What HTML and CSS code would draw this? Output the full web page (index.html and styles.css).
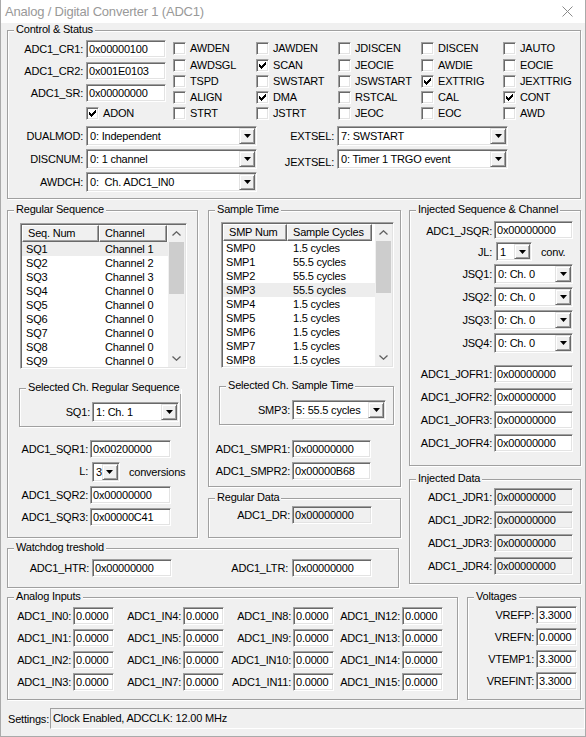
FILE: index.html
```html
<!DOCTYPE html>
<html>
<head>
<meta charset="utf-8">
<link rel="stylesheet" href="styles.css">
</head>
<body>
<div class="window">
  <div class="titlebar">
    <span class="title">Analog / Digital Converter 1 (ADC1)</span>
    <svg class="close" width="11" height="11" viewBox="0 0 11 11"><path d="M0.5 0.5L10.5 10.5M10.5 0.5L0.5 10.5" stroke="#8a8a8a" stroke-width="1" fill="none"/></svg>
  </div>
  <div class="client">
    <div class="group g-cs">
      <span class="legend">Control &amp; Status</span>
      <div class="cs-top">
        <div class="regs">
          <span class="lbl">ADC1_CR1:</span><span class="edit">0x00000100</span>
          <span class="lbl">ADC1_CR2:</span><span class="edit">0x001E0103</span>
          <span class="lbl">ADC1_SR:</span><span class="edit">0x00000000</span>
          <span></span><span class="chk adon"><span class="box on"><svg width="7" height="7" viewBox="0 0 7 7"><path d="M0 2h1v3H0zM1 3h1v3H1zM2 4h1v3H2zM3 3h1v3H3zM4 2h1v3H4zM5 1h1v3H5zM6 0h1v3H6z"/></svg></span>ADON</span>
        </div>
        <div class="checks">
          <span class="chk"><span class="box"></span>AWDEN</span>
          <span class="chk"><span class="box"></span>JAWDEN</span>
          <span class="chk"><span class="box"></span>JDISCEN</span>
          <span class="chk"><span class="box"></span>DISCEN</span>
          <span class="chk"><span class="box"></span>JAUTO</span>
          <span class="chk"><span class="box"></span>AWDSGL</span>
          <span class="chk"><span class="box on"><svg width="7" height="7" viewBox="0 0 7 7"><path d="M0 2h1v3H0zM1 3h1v3H1zM2 4h1v3H2zM3 3h1v3H3zM4 2h1v3H4zM5 1h1v3H5zM6 0h1v3H6z"/></svg></span>SCAN</span>
          <span class="chk"><span class="box"></span>JEOCIE</span>
          <span class="chk"><span class="box"></span>AWDIE</span>
          <span class="chk"><span class="box"></span>EOCIE</span>
          <span class="chk"><span class="box"></span>TSPD</span>
          <span class="chk"><span class="box"></span>SWSTART</span>
          <span class="chk"><span class="box"></span>JSWSTART</span>
          <span class="chk"><span class="box on"><svg width="7" height="7" viewBox="0 0 7 7"><path d="M0 2h1v3H0zM1 3h1v3H1zM2 4h1v3H2zM3 3h1v3H3zM4 2h1v3H4zM5 1h1v3H5zM6 0h1v3H6z"/></svg></span>EXTTRIG</span>
          <span class="chk"><span class="box"></span>JEXTTRIG</span>
          <span class="chk"><span class="box"></span>ALIGN</span>
          <span class="chk"><span class="box on"><svg width="7" height="7" viewBox="0 0 7 7"><path d="M0 2h1v3H0zM1 3h1v3H1zM2 4h1v3H2zM3 3h1v3H3zM4 2h1v3H4zM5 1h1v3H5zM6 0h1v3H6z"/></svg></span>DMA</span>
          <span class="chk"><span class="box"></span>RSTCAL</span>
          <span class="chk"><span class="box"></span>CAL</span>
          <span class="chk"><span class="box on"><svg width="7" height="7" viewBox="0 0 7 7"><path d="M0 2h1v3H0zM1 3h1v3H1zM2 4h1v3H2zM3 3h1v3H3zM4 2h1v3H4zM5 1h1v3H5zM6 0h1v3H6z"/></svg></span>CONT</span>
          <span class="chk"><span class="box"></span>STRT</span>
          <span class="chk"><span class="box"></span>JSTRT</span>
          <span class="chk"><span class="box"></span>JEOC</span>
          <span class="chk"><span class="box"></span>EOC</span>
          <span class="chk"><span class="box"></span>AWD</span>
        </div>
      </div>
      <div class="cs-combos">
        <span class="lbl">DUALMOD:</span>
        <span class="combo"><span class="val">0: Independent</span><span class="btn"><svg width="7" height="4" viewBox="0 0 7 4"><path d="M0 0h7L3.5 4z"/></svg></span></span>
        <span class="lbl">EXTSEL:</span>
        <span class="combo"><span class="val">7: SWSTART</span><span class="btn"><svg width="7" height="4" viewBox="0 0 7 4"><path d="M0 0h7L3.5 4z"/></svg></span></span>
        <span class="lbl">DISCNUM:</span>
        <span class="combo"><span class="val">0: 1 channel</span><span class="btn"><svg width="7" height="4" viewBox="0 0 7 4"><path d="M0 0h7L3.5 4z"/></svg></span></span>
        <span class="lbl low">JEXTSEL:</span>
        <span class="combo"><span class="val">0: Timer 1 TRGO event</span><span class="btn"><svg width="7" height="4" viewBox="0 0 7 4"><path d="M0 0h7L3.5 4z"/></svg></span></span>
        <span class="lbl">AWDCH:</span>
        <span class="combo"><span class="val">0:&nbsp; Ch. ADC1_IN0</span><span class="btn"><svg width="7" height="4" viewBox="0 0 7 4"><path d="M0 0h7L3.5 4z"/></svg></span></span>
      </div>
    </div>

    <div class="mid">
      <div class="mid-left">
        <div class="mid-row">
          <div class="group g-regseq">
            <span class="legend">Regular Sequence</span>
            <div class="list list-seq">
              <div class="list-main">
                <div class="lhead"><span class="hcell c1">Seq. Num</span><span class="hcell c2">Channel</span></div>
                <div class="lrow sel"><span class="c1">SQ1</span><span class="c2">Channel 1</span></div>
                <div class="lrow"><span class="c1">SQ2</span><span class="c2">Channel 2</span></div>
                <div class="lrow"><span class="c1">SQ3</span><span class="c2">Channel 3</span></div>
                <div class="lrow"><span class="c1">SQ4</span><span class="c2">Channel 0</span></div>
                <div class="lrow"><span class="c1">SQ5</span><span class="c2">Channel 0</span></div>
                <div class="lrow"><span class="c1">SQ6</span><span class="c2">Channel 0</span></div>
                <div class="lrow"><span class="c1">SQ7</span><span class="c2">Channel 0</span></div>
                <div class="lrow"><span class="c1">SQ8</span><span class="c2">Channel 0</span></div>
                <div class="lrow"><span class="c1">SQ9</span><span class="c2">Channel 0</span></div>
              </div>
              <div class="scroll">
                <span class="sarrow"><svg width="9" height="5" viewBox="0 0 9 5"><path d="M0.5 4.5L4.5 0.8L8.5 4.5" stroke="#606060" stroke-width="1.3" fill="none"/></svg></span>
                <span class="thumb"></span>
                <span class="strack"></span>
                <span class="sarrow"><svg width="9" height="5" viewBox="0 0 9 5"><path d="M0.5 0.5L4.5 4.2L8.5 0.5" stroke="#606060" stroke-width="1.3" fill="none"/></svg></span>
              </div>
            </div>
            <div class="group sub sub-seq">
              <span class="legend">Selected Ch. Regular Sequence</span>
              <span class="lbl">SQ1:</span>
              <span class="combo w87"><span class="val">1: Ch. 1</span><span class="btn"><svg width="7" height="4" viewBox="0 0 7 4"><path d="M0 0h7L3.5 4z"/></svg></span></span>
            </div>
            <div class="fields f-seq">
              <span class="lbl">ADC1_SQR1:</span><span class="edit">0x00200000</span>
              <span class="lbl">L:</span>
              <span class="inline"><span class="combo w32"><span class="val">3</span><span class="btn"><svg width="7" height="4" viewBox="0 0 7 4"><path d="M0 0h7L3.5 4z"/></svg></span></span><span class="after">conversions</span></span>
              <span class="lbl">ADC1_SQR2:</span><span class="edit">0x00000000</span>
              <span class="lbl">ADC1_SQR3:</span><span class="edit">0x00000C41</span>
            </div>
          </div>
          <div class="col2">
            <div class="group g-sample">
              <span class="legend">Sample Time</span>
              <div class="list list-smp">
                <div class="list-main">
                  <div class="lhead"><span class="hcell s1">SMP Num</span><span class="hcell s2">Sample Cycles</span></div>
                  <div class="lrow"><span class="s1">SMP0</span><span class="s2">1.5 cycles</span></div>
                  <div class="lrow"><span class="s1">SMP1</span><span class="s2">55.5 cycles</span></div>
                  <div class="lrow"><span class="s1">SMP2</span><span class="s2">55.5 cycles</span></div>
                  <div class="lrow sel"><span class="s1">SMP3</span><span class="s2">55.5 cycles</span></div>
                  <div class="lrow"><span class="s1">SMP4</span><span class="s2">1.5 cycles</span></div>
                  <div class="lrow"><span class="s1">SMP5</span><span class="s2">1.5 cycles</span></div>
                  <div class="lrow"><span class="s1">SMP6</span><span class="s2">1.5 cycles</span></div>
                  <div class="lrow"><span class="s1">SMP7</span><span class="s2">1.5 cycles</span></div>
                  <div class="lrow"><span class="s1">SMP8</span><span class="s2">1.5 cycles</span></div>
                </div>
                <div class="scroll">
                  <span class="sarrow"><svg width="9" height="5" viewBox="0 0 9 5"><path d="M0.5 4.5L4.5 0.8L8.5 4.5" stroke="#606060" stroke-width="1.3" fill="none"/></svg></span>
                  <span class="thumb"></span>
                  <span class="strack"></span>
                  <span class="sarrow"><svg width="9" height="5" viewBox="0 0 9 5"><path d="M0.5 0.5L4.5 4.2L8.5 0.5" stroke="#606060" stroke-width="1.3" fill="none"/></svg></span>
                </div>
              </div>
              <div class="group sub sub-smp">
                <span class="legend">Selected Ch. Sample Time</span>
                <span class="lbl">SMP3:</span>
                <span class="combo w94"><span class="val">5: 55.5 cycles</span><span class="btn"><svg width="7" height="4" viewBox="0 0 7 4"><path d="M0 0h7L3.5 4z"/></svg></span></span>
              </div>
              <div class="fields f-smp">
                <span class="lbl">ADC1_SMPR1:</span><span class="edit">0x00000000</span>
                <span class="lbl">ADC1_SMPR2:</span><span class="edit">0x00000B68</span>
              </div>
            </div>
            <div class="group g-regdata">
              <span class="legend">Regular Data</span>
              <div class="fields f-smp f-dr">
                <span class="lbl">ADC1_DR:</span><span class="edit ro">0x00000000</span>
              </div>
            </div>
          </div>
        </div>
        <div class="group g-wd">
          <span class="legend">Watchdog treshold</span>
          <div class="wd-row">
            <span class="lbl wd1">ADC1_HTR:</span><span class="edit wd-edit">0x00000000</span>
            <span class="lbl wd2">ADC1_LTR:</span><span class="edit wd-edit">0x00000000</span>
          </div>
        </div>
      </div>
      <div class="mid-right">
        <div class="group g-inj">
          <span class="legend">Injected Sequence &amp; Channel</span>
          <div class="fields f-inj">
            <span class="lbl">ADC1_JSQR:</span><span class="edit">0x00000000</span>
            <span class="lbl">JL:</span>
            <span class="inline"><span class="combo w36 h19"><span class="val">1</span><span class="btn"><svg width="7" height="4" viewBox="0 0 7 4"><path d="M0 0h7L3.5 4z"/></svg></span></span><span class="after">conv.</span></span>
            <span class="lbl">JSQ1:</span><span class="combo"><span class="val">0: Ch. 0</span><span class="btn"><svg width="7" height="4" viewBox="0 0 7 4"><path d="M0 0h7L3.5 4z"/></svg></span></span>
            <span class="lbl">JSQ2:</span><span class="combo"><span class="val">0: Ch. 0</span><span class="btn"><svg width="7" height="4" viewBox="0 0 7 4"><path d="M0 0h7L3.5 4z"/></svg></span></span>
            <span class="lbl">JSQ3:</span><span class="combo"><span class="val">0: Ch. 0</span><span class="btn"><svg width="7" height="4" viewBox="0 0 7 4"><path d="M0 0h7L3.5 4z"/></svg></span></span>
            <span class="lbl">JSQ4:</span><span class="combo"><span class="val">0: Ch. 0</span><span class="btn"><svg width="7" height="4" viewBox="0 0 7 4"><path d="M0 0h7L3.5 4z"/></svg></span></span>
          </div>
          <div class="fields f-jofr">
            <span class="lbl">ADC1_JOFR1:</span><span class="edit">0x00000000</span>
            <span class="lbl">ADC1_JOFR2:</span><span class="edit">0x00000000</span>
            <span class="lbl">ADC1_JOFR3:</span><span class="edit">0x00000000</span>
            <span class="lbl">ADC1_JOFR4:</span><span class="edit">0x00000000</span>
          </div>
        </div>
        <div class="group g-injdata">
          <span class="legend">Injected Data</span>
          <div class="fields f-jdr">
            <span class="lbl">ADC1_JDR1:</span><span class="edit ro">0x00000000</span>
            <span class="lbl">ADC1_JDR2:</span><span class="edit ro">0x00000000</span>
            <span class="lbl">ADC1_JDR3:</span><span class="edit ro">0x00000000</span>
            <span class="lbl">ADC1_JDR4:</span><span class="edit ro">0x00000000</span>
          </div>
        </div>
      </div>
    </div>

    <div class="bottom">
      <div class="group g-analog">
        <span class="legend">Analog Inputs</span>
        <div class="ain">
          <span class="cell"><span class="lbl">ADC1_IN0:</span><span class="edit num">0.0000</span></span>
          <span class="cell"><span class="lbl">ADC1_IN4:</span><span class="edit num">0.0000</span></span>
          <span class="cell"><span class="lbl">ADC1_IN8:</span><span class="edit num">0.0000</span></span>
          <span class="cell"><span class="lbl">ADC1_IN12:</span><span class="edit num">0.0000</span></span>
          <span class="cell"><span class="lbl">ADC1_IN1:</span><span class="edit num">0.0000</span></span>
          <span class="cell"><span class="lbl">ADC1_IN5:</span><span class="edit num">0.0000</span></span>
          <span class="cell"><span class="lbl">ADC1_IN9:</span><span class="edit num">0.0000</span></span>
          <span class="cell"><span class="lbl">ADC1_IN13:</span><span class="edit num">0.0000</span></span>
          <span class="cell"><span class="lbl">ADC1_IN2:</span><span class="edit num">0.0000</span></span>
          <span class="cell"><span class="lbl">ADC1_IN6:</span><span class="edit num">0.0000</span></span>
          <span class="cell"><span class="lbl">ADC1_IN10:</span><span class="edit num">0.0000</span></span>
          <span class="cell"><span class="lbl">ADC1_IN14:</span><span class="edit num">0.0000</span></span>
          <span class="cell"><span class="lbl">ADC1_IN3:</span><span class="edit num">0.0000</span></span>
          <span class="cell"><span class="lbl">ADC1_IN7:</span><span class="edit num">0.0000</span></span>
          <span class="cell"><span class="lbl">ADC1_IN11:</span><span class="edit num">0.0000</span></span>
          <span class="cell"><span class="lbl">ADC1_IN15:</span><span class="edit num">0.0000</span></span>
        </div>
      </div>
      <div class="group g-volt">
        <span class="legend">Voltages</span>
        <div class="vin">
          <span class="cell"><span class="lbl">VREFP:</span><span class="edit num">3.3000</span></span>
          <span class="cell"><span class="lbl">VREFN:</span><span class="edit num">0.0000</span></span>
          <span class="cell"><span class="lbl">VTEMP1:</span><span class="edit num">3.3000</span></span>
          <span class="cell"><span class="lbl">VREFINT:</span><span class="edit num">3.3000</span></span>
        </div>
      </div>
    </div>

    <div class="status">
      <span class="st-lbl">Settings:</span>
      <span class="st-field">Clock Enabled, ADCCLK: 12.00 MHz</span>
    </div>
  </div>
</div>
</body>
</html>
```
FILE: styles.css
```css
* { box-sizing: border-box; }
html, body { margin: 0; padding: 0; }
body {
  width: 586px; height: 737px; overflow: hidden; background: #f0f0f0;
  font-family: "Liberation Sans", Arial, sans-serif; font-size: 11px; color: #000;
  letter-spacing: -0.2px;
}
.window {
  width: 586px; height: 737px; background: #f0f0f0;
  border: 1px solid #aaaaaa; border-top: 0;
  display: flex; flex-direction: column;
}
.titlebar {
  flex: none; height: 23px; background: #fff;
  display: flex; align-items: center; justify-content: space-between;
  padding-left: 4px; padding-right: 12px;
}
.title { font-family: "Liberation Sans", Arial, sans-serif; font-size: 13px; letter-spacing: -0.2px; color: #999; white-space: nowrap; }
.close { display: block; }
.client { flex: 1; padding: 7px 0 0 6px; display: flex; flex-direction: column; }

/* group box */
.group {
  position: relative; flex: none;
  border: 1px solid #a0a0a0;
  box-shadow: inset 1px 1px 0 #fff, 1px 1px 0 #fff;
}
.legend {
  position: absolute; top: -8px; left: 6px; padding: 0 2px;
  background: #f0f0f0; line-height: 13px; white-space: nowrap;
}

/* basic controls */
.lbl { white-space: nowrap; text-align: right; display: block; }
.edit {
  display: block; height: 18px; background: #fff;
  border: 1px solid; border-color: #a0a0a0 #fff #fff #a0a0a0;
  box-shadow: inset 1px 1px 0 #696969, inset -1px -1px 0 #e3e3e3;
  padding: 1px 0 0 2px; line-height: 14px; white-space: nowrap; overflow: hidden;
}
.edit.ro { background: #f0f0f0; }
.combo {
  display: flex; height: 20px; background: #fff;
  border: 1px solid; border-color: #a0a0a0 #fff #fff #a0a0a0;
  box-shadow: inset 1px 1px 0 #696969, inset -1px -1px 0 #e3e3e3;
  padding: 1px;
}
.combo .val { flex: 1; padding-left: 2px; line-height: 16px; white-space: nowrap; overflow: hidden; }
.combo .btn {
  flex: none; width: 16px; background: #f0f0f0;
  border: 1px solid; border-color: #e3e3e3 #696969 #696969 #e3e3e3;
  box-shadow: inset 1px 1px 0 #fff, inset -1px -1px 0 #a0a0a0;
  display: flex; align-items: center; justify-content: center;
}
.combo .btn svg { display: block; }
.combo.h19 { height: 19px; }
.w87 { width: 87px; }
.w94 { width: 94px; }
.w32 { width: 32px; }
.w36 { width: 36px; }
.chk { display: flex; align-items: center; gap: 4px; height: 13px; white-space: nowrap; line-height: 13px; }
.box {
  flex: none; width: 13px; height: 13px; background: #fff;
  border: 1px solid; border-color: #a0a0a0 #fff #fff #a0a0a0;
  box-shadow: inset 1px 1px 0 #696969, inset -1px -1px 0 #e3e3e3;
  display: flex; align-items: center; justify-content: center;
}
.box svg { display: block; }

/* Control & Status */
.g-cs { width: 574px; height: 169px; padding-top: 9px; }
.cs-top { display: flex; height: 80px; }
.regs {
  display: grid; grid-template-columns: 75px 80px; column-gap: 3px;
  grid-template-rows: 18px 18px 18px 13px; row-gap: 4px;
}
.regs .lbl { line-height: 18px; }
.adon { margin-top: 1px; }
.checks {
  margin-left: 7px; margin-top: 2px;
  display: grid; grid-template-columns: 83px 82px 83px 82px 70px;
  grid-template-rows: 17px 16px 16px 16px 13px;
}
.cs-combos {
  margin-top: 6px; display: grid;
  grid-template-columns: 75px 171px 74px 171px; column-gap: 3px;
  grid-template-rows: 20px 20px 20px; row-gap: 3px;
}
.cs-combos .lbl { line-height: 20px; }
.cs-combos .lbl.low { line-height: 22px; padding-top: 2px; }

/* middle */
.mid { display: flex; margin-top: 11px; }
.mid-left { width: 394px; display: flex; flex-direction: column; }
.mid-row { display: flex; }
.col2 { margin-left: 10px; width: 193px; display: flex; flex-direction: column; }
.mid-right { margin-left: 8px; width: 172px; display: flex; flex-direction: column; }

.g-regseq { width: 191px; height: 328px; }
.g-sample { width: 193px; height: 277px; }
.g-regdata { width: 193px; height: 40px; margin-top: 11px; }
.g-wd { width: 392px; height: 40px; margin-top: 10px; }
.g-inj { width: 172px; height: 256px; }
.g-injdata { width: 172px; height: 105px; margin-top: 13px; }

/* list view */
.list {
  display: flex; background: #fff;
  border: 1px solid; border-color: #a0a0a0 #fff #fff #a0a0a0;
  box-shadow: inset 1px 1px 0 #696969, inset -1px -1px 0 #e3e3e3;
  padding: 1px; height: 146px;
}
.list-seq { width: 167px; margin: 12px 0 0 12px; }
.list-smp { width: 173px; margin: 11px 0 0 12px; }
.list-main { flex: 1; overflow: hidden; }
.lhead { display: flex; height: 17px; }
.hcell {
  flex: none; height: 17px; background: #f0f0f0;
  border: 1px solid; border-color: #fff #696969 #696969 #fff;
  box-shadow: inset -1px -1px 0 #a0a0a0;
  padding-left: 5px; line-height: 14px; white-space: nowrap;
}
.hcell.c1 { width: 77px; }
.hcell.c2 { width: 68px; }
.hcell.s1 { width: 64px; }
.hcell.s2 { width: 85px; }
.lrow { display: flex; height: 14px; line-height: 14px; white-space: nowrap; }
.lrow.sel { background: #ededed; }
.lrow .c1 { width: 77px; padding-left: 4px; }
.lrow .c2 { padding-left: 6px; }
.lrow .s1 { width: 64px; padding-left: 3px; }
.lrow .s2 { padding-left: 6px; }
.scroll { flex: none; width: 17px; background: #f0f0f0; display: flex; flex-direction: column; }
.sarrow { flex: none; height: 17px; display: flex; align-items: center; justify-content: center; }
.sarrow svg { display: block; }
.thumb { flex: none; height: 52px; background: #cdcdcd; margin: 0 1px; }
.strack { flex: 1; }

/* sub groups */
.sub { display: flex; justify-content: flex-end; align-items: center; }
.sub .lbl { margin-right: 2px; }
.sub-seq { width: 162px; height: 39px; margin: 19px 0 0 11px; padding: 8px 1px 0 0; }
.sub-smp { width: 175px; height: 39px; margin: 18px 0 0 10px; padding: 9px 7px 0 0; }

/* field grids */
.fields { display: grid; column-gap: 2px; }
.fields .lbl { line-height: 18px; }
.f-seq {
  margin: 13px 0 0 12px; grid-template-columns: 68px 81px;
  grid-template-rows: 18px 20px 18px 18px; row-gap: 4px;
}
.f-seq .lbl:nth-of-type(2) { line-height: 20px; }
.inline { display: flex; align-items: center; gap: 9px; white-space: nowrap; }
.inline .combo { margin-left: 2px; }
.f-smp { margin: 15px 0 0 5px; grid-template-columns: 76px 79px; grid-template-rows: 18px 18px; row-gap: 4px; }
.f-dr { margin-top: 7px; grid-template-columns: 76px 80px; grid-template-rows: 18px; }
.f-inj {
  margin-top: 10px; grid-template-columns: 82px 79px;
  grid-template-rows: 18px 19px 20px 20px 20px 20px; row-gap: 3px;
}
.f-inj .lbl { line-height: 20px; }
.f-jofr { margin-top: 12px; grid-template-columns: 82px 79px; grid-template-rows: repeat(4, 18px); row-gap: 5px; }
.f-jdr { margin-top: 8px; grid-template-columns: 82px 79px; grid-template-rows: repeat(4, 18px); row-gap: 5px; }

/* watchdog */
.wd-row { display: flex; padding-top: 10px; }
.wd-row .lbl { line-height: 18px; }
.wd1 { width: 81px; }
.wd2 { width: 116px; }
.wd-edit { width: 80px; margin-left: 3px; }
.wd2 + .wd-edit { margin-left: 4px; }

/* bottom */
.bottom { display: flex; margin-top: 9px; }
.g-analog { width: 451px; height: 103px; }
.g-volt { width: 114px; height: 103px; margin-left: 9px; }
.ain {
  display: grid; padding-top: 9px;
  grid-template-columns: 106px 110px 110px 109px;
  grid-template-rows: repeat(4, 18px); row-gap: 4px;
}
.vin {
  display: grid; padding-top: 8px; padding-right: 3px;
  grid-template-columns: 1fr; grid-template-rows: repeat(4, 18px); row-gap: 4px;
}
.cell { display: flex; justify-content: flex-end; align-items: center; gap: 2px; }
.cell .lbl { line-height: 18px; }
.edit.num { width: 41px; }

/* status bar */
.status { display: flex; align-items: center; margin-top: 8px; height: 21px; }
.st-lbl { margin-left: 1px; white-space: nowrap; }
.st-field {
  flex: 1; height: 21px; margin-left: 1px;
  border: 1px solid; border-color: #a0a0a0 #fff #fff #a0a0a0;
  padding-left: 2px; line-height: 19px; white-space: nowrap;
}
```
